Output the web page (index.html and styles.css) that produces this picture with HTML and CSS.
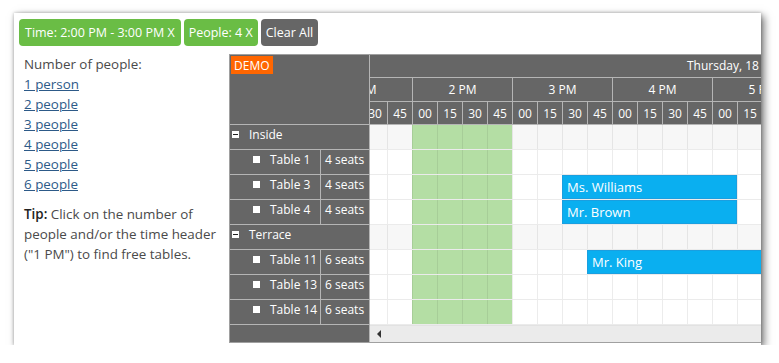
FILE: index.html
```html
<!DOCTYPE html>
<html>
<head>
<meta charset="utf-8">
<link rel="stylesheet" href="styles.css">
</head>
<body>
<div class="window">
  <div class="filters">
    <span class="chip chip-green chip-wide">Time: 2:00 PM - 3:00 PM X</span>
    <span class="chip chip-green">People: 4 X</span>
    <span class="chip chip-gray">Clear All</span>
  </div>
  <div class="main">
    <div class="side">
      <div class="line">Number of people:</div>
      <a class="line link" href="#">1 person</a>
      <a class="line link" href="#">2 people</a>
      <a class="line link" href="#">3 people</a>
      <a class="line link" href="#">4 people</a>
      <a class="line link" href="#">5 people</a>
      <a class="line link" href="#">6 people</a>
      <p class="tip"><b>Tip:</b> Click on the number of<br>people and/or the time header<br>("1 PM") to find free tables.</p>
    </div>
    <div class="scheduler">
      <div class="rh">
        <div class="rh-corner"><span class="demo">DEMO</span></div>
        <div class="rh-row group"><span class="minus"></span><span>Inside</span></div>
        <div class="rh-row res"><span class="name"><span class="box"></span>Table 1</span><span class="seats">4 seats</span></div>
        <div class="rh-row res"><span class="name"><span class="box"></span>Table 3</span><span class="seats">4 seats</span></div>
        <div class="rh-row res"><span class="name"><span class="box"></span>Table 4</span><span class="seats">4 seats</span></div>
        <div class="rh-row group"><span class="minus"></span><span>Terrace</span></div>
        <div class="rh-row res"><span class="name"><span class="box"></span>Table 11</span><span class="seats">6 seats</span></div>
        <div class="rh-row res"><span class="name"><span class="box"></span>Table 13</span><span class="seats">6 seats</span></div>
        <div class="rh-row res"><span class="name"><span class="box"></span>Table 14</span><span class="seats">6 seats</span></div>
        <div class="rh-fill"></div>
      </div>
      <div class="tl">
        <div class="track">
          <div class="day">Thursday, 18 October 2018</div>
          <div class="hours">
            <span class="hour">1 PM</span><span class="hour">2 PM</span><span class="hour">3 PM</span><span class="hour">4 PM</span><span class="hour">5 PM</span>
          </div>
          <div class="mins">
            <span class="min">00</span><span class="min">15</span><span class="min">30</span><span class="min">45</span>
            <span class="min">00</span><span class="min">15</span><span class="min">30</span><span class="min">45</span>
            <span class="min">00</span><span class="min">15</span><span class="min">30</span><span class="min">45</span>
            <span class="min">00</span><span class="min">15</span><span class="min">30</span><span class="min">45</span>
            <span class="min">00</span><span class="min">15</span><span class="min">30</span><span class="min">45</span>
          </div>
          <div class="row grp"></div>
          <div class="row"></div>
          <div class="row"><div class="event" style="left:250px;width:175px">Ms. Williams</div></div>
          <div class="row"><div class="event" style="left:250px;width:175px">Mr. Brown</div></div>
          <div class="row grp"></div>
          <div class="row"><div class="event" style="left:275px;width:225px">Mr. King</div></div>
          <div class="row"></div>
          <div class="row"></div>
        </div>
        <div class="scrollbar"><span class="sb-btn"><span class="arrow"></span></span></div>
      </div>
    </div>
  </div>
</div>
</body>
</html>
```

FILE: styles.css
```css
* { box-sizing: border-box; }
html, body { margin: 0; padding: 0; background: #fff; }
body { font-family: "Open Sans", "Noto Sans", sans-serif; }

.window {
  margin: 13px 0 0 14px;
  width: 747px;
  height: 332px;
  background: #fff;
  overflow: hidden;
  padding: 6px 0 0 5px;
  box-shadow: 3px 3px 8px rgba(0,0,0,0.55), 0 0 3px rgba(0,0,0,0.25);
}

.filters { display: flex; gap: 3px; height: 27px; }
.chip {
  display: inline-flex; align-items: center;
  height: 27px; padding: 0 5px;
  border-radius: 4px;
  color: #fff; font-size: 12.5px;
}
.chip-wide { padding: 0 6px; }
.chip-green { background: #6abd45; }
.chip-gray { background: #666; }

.main { display: flex; margin-top: 8px; }
.side {
  flex: none; width: 210px; padding-left: 5px;
  font-size: 13.4px; line-height: 20px; color: #4a4a4a;
}
.line { display: block; }
.link { color: #2d5a88; text-decoration: underline; }
.tip { margin: 10px 0 0; }
.tip b { color: #222; font-weight: 600; }

.scheduler {
  flex: none; width: 560px; height: 289px;
  display: flex;
  border-top: 1px solid #a0a0a0;
  border-left: 1px solid #a0a0a0;
  border-bottom: 1px solid #a0a0a0;
  font-size: 12px; color: #fff;
}

.rh {
  flex: none; width: 140px;
  background: #666;
  border-right: 1px solid #b5b5b5;
  display: flex; flex-direction: column;
}
.rh-corner { height: 70px; border-bottom: 1px solid #b5b5b5; padding: 1px 0 0 1px; }
.demo {
  display: inline-flex; align-items: center;
  height: 18px; padding: 0 3px;
  background: #ff6600; color: #fff; font-size: 12px;
}
.rh-row { height: 25px; border-bottom: 1px solid #b5b5b5; display: flex; align-items: center; padding-bottom: 5px; }
.group { padding-left: 2px; }
.minus {
  width: 7px; height: 7px; background: #fff; margin-right: 10px;
  display: flex; align-items: center; justify-content: center;
}
.minus::after { content: ""; width: 5px; height: 1px; background: #222; }
.res { align-items: stretch; padding-bottom: 0; }
.name {
  width: 91px; display: flex; align-items: center; padding: 0 0 5px 23px;
  border-right: 1px solid #b5b5b5;
}
.box { width: 7px; height: 7px; background: #fff; margin-right: 10px; }
.seats { flex: 1; display: flex; align-items: center; padding: 0 0 5px 4px; }
.rh-fill { flex: 1; }

.tl { flex: 1; overflow: hidden; display: flex; flex-direction: column; }
.track { width: 500px; margin-left: -58px; flex: none; }
.day {
  height: 23px; background: #666; border-bottom: 1px solid #b5b5b5;
  padding-left: 375px; line-height: 22px; white-space: nowrap; overflow: hidden;
}
.hours, .mins { display: flex; background: #666; border-bottom: 1px solid #b5b5b5; }
.hours { height: 24px; }
.mins { height: 23px; }
.hour, .min {
  flex: none; display: flex; align-items: center; justify-content: center;
  border-left: 1px solid #b5b5b5;
}
.hour { width: 100px; }
.min { width: 25px; }

.row {
  position: relative; height: 25px;
  border-bottom: 1px solid #ebebeb;
  background:
    repeating-linear-gradient(to right, rgba(0,0,0,0.075) 0 1px, transparent 1px 25px),
    linear-gradient(to right, transparent 100px, #b4dea4 100px 200px, transparent 200px),
    #fff;
}
.row.grp {
  background:
    repeating-linear-gradient(to right, rgba(0,0,0,0.075) 0 1px, transparent 1px 25px),
    linear-gradient(to right, transparent 100px, #b4dea4 100px 200px, transparent 200px),
    #f7f7f7;
}
.event {
  position: absolute; top: 0; height: 24px;
  background: #0aaff0; border: 1px solid #1a9fe0;
  color: #fff; font-size: 13px; padding-left: 4px;
  display: flex; align-items: center; white-space: nowrap;
}

.scrollbar { flex: 1; background: #ebebeb; border-top: 1px solid #e2e2e2; display: flex; }
.sb-btn { width: 17px; display: flex; align-items: center; justify-content: center; }
.arrow {
  width: 0; height: 0;
  border-top: 4px solid transparent; border-bottom: 4px solid transparent;
  border-right: 4px solid #333;
}
```
